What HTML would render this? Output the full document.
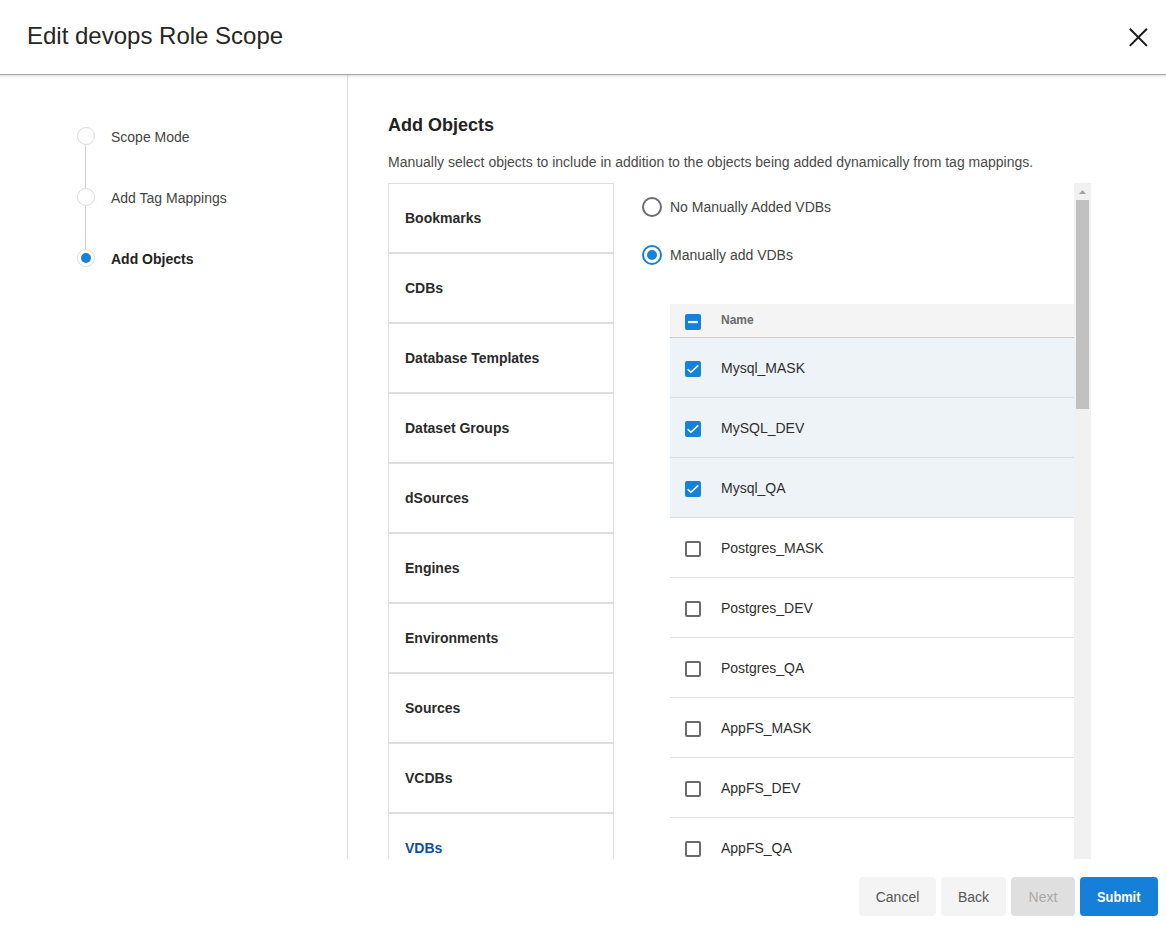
<!DOCTYPE html>
<html>
<head>
<meta charset="utf-8">
<style>
*{box-sizing:border-box}
html,body{margin:0;padding:0}
body{width:1166px;height:925px;position:relative;overflow:hidden;background:#fff;font-family:"Liberation Sans",sans-serif;color:#222}
.hdr{position:absolute;left:-10px;top:0;width:1186px;height:75px;border-bottom:1px solid #a6a6a6;box-shadow:0 1px 3px rgba(0,0,0,.16);background:#fff;z-index:2}
.title{position:absolute;left:37px;top:22px;font-size:24px;line-height:28px;color:#262626;white-space:nowrap}
.close{position:absolute;left:1139px;top:28px;width:19px;height:19px}
.left{position:absolute;left:0;top:75px;width:348px;height:784px;border-right:1px solid #ddd}
.step{position:absolute;left:77px;width:18px;height:18px;border:1px solid #dcdcdc;border-radius:50%;background:#fff}
.step .dot{position:absolute;left:3px;top:3px;width:10px;height:10px;border-radius:50%;background:#1681d9}
.vline{position:absolute;left:85px;width:1px;background:#cfcfcf}
.slabel{position:absolute;left:111px;font-size:14px;line-height:16px;color:#444;white-space:nowrap}
.slabel.b{font-weight:bold;color:#222}
.main{position:absolute;left:348px;top:75px;width:818px;height:784px;overflow:hidden}
.h2{position:absolute;left:40px;top:39px;font-size:18px;line-height:22px;font-weight:bold;color:#222;white-space:nowrap}
.desc{position:absolute;left:40px;top:79px;font-size:14px;line-height:16px;color:#4a4a4a;white-space:nowrap}
.tabs{position:absolute;left:40px;top:108px;width:226px}
.tab{height:70px;border:1px solid #dedede;font-weight:bold;font-size:14px;line-height:68px;padding-left:16px;color:#2a2a2a;white-space:nowrap}
.tab.act{color:#0c4ea3}
.radio{position:absolute;left:294px;width:20px;height:20px;border:2px solid #6b6b6b;border-radius:50%}
.radio.on{border-color:#1681d9}
.radio.on .dot{position:absolute;left:3px;top:3px;width:10px;height:10px;border-radius:50%;background:#1681d9}
.rlabel{position:absolute;left:322px;font-size:14px;line-height:16px;color:#444;white-space:nowrap}
.tbl{position:absolute;left:322px;top:229px;width:404px}
.th{height:34px;background:#f4f4f4;border-bottom:1px solid #cdcdcd;position:relative}
.tr{height:60px;border-bottom:1px solid #e2e2e2;position:relative;background:#fff}
.tr.sel{background:#eef3f8;border-bottom-color:#d8dde2}
.cb{position:absolute;left:15px;width:16px;height:16px;border-radius:2px}
.th .cb{top:10px;background:#1681d9}
.tr .cb{top:23px;border:2px solid #6b6b6b}
.tr.sel .cb{background:#1681d9;border:none}
.cb svg{position:absolute;left:0;top:0}
.th .nm{position:absolute;left:51px;top:9px;font-size:12px;line-height:14px;font-weight:bold;color:#6a6a6a}
.tr .nm{position:absolute;left:51px;top:22px;font-size:14px;line-height:16px;color:#2e2e2e;white-space:nowrap}
.track{position:absolute;left:726px;top:108px;width:17px;height:676px;background:#f1f1f1}
.thumb{position:absolute;left:2px;top:17px;width:13px;height:209px;background:#c1c1c1}
.arrow{position:absolute;left:5px;top:7px;width:0;height:0;border-left:3.5px solid transparent;border-right:3.5px solid transparent;border-bottom:4px solid #a3a3a3}
.btn{position:absolute;top:877px;height:39px;border-radius:4px;font-size:14px;line-height:41px;text-align:center;white-space:nowrap}
.b1{left:859px;width:77px;background:#f4f4f4;color:#555}
.b2{left:941px;width:65px;background:#f4f4f4;color:#555}
.b3{left:1011px;width:64px;background:#dfdfdf;color:#a9a9a9}
.b4{left:1080px;width:78px;background:#1680d9;color:#fff;font-weight:bold;font-size:14px}
.b4 span{display:inline-block;transform:scaleX(0.915)}
</style>
</head>
<body>
<div class="hdr">
  <div class="title">Edit devops Role Scope</div>
  <svg class="close" viewBox="0 0 19 19" width="19" height="19"><path d="M0.8 0.8L17.9 17.9M17.9 0.8L0.8 17.9" stroke="#1a1a1a" stroke-width="2" fill="none"/></svg>
</div>

<div class="left">
  <div class="vline" style="top:70px;height:44px"></div>
  <div class="vline" style="top:131px;height:44px"></div>
  <div class="step" style="top:52px"></div>
  <div class="step" style="top:113px"></div>
  <div class="step" style="top:174px"><div class="dot"></div></div>
  <div class="slabel" style="top:54px">Scope Mode</div>
  <div class="slabel" style="top:115px">Add Tag Mappings</div>
  <div class="slabel b" style="top:176px">Add Objects</div>
</div>

<div class="main">
  <div class="h2">Add Objects</div>
  <div class="desc">Manually select objects to include in addition to the objects being added dynamically from tag mappings.</div>
  <div class="tabs">
    <div class="tab">Bookmarks</div>
    <div class="tab">CDBs</div>
    <div class="tab">Database Templates</div>
    <div class="tab">Dataset Groups</div>
    <div class="tab">dSources</div>
    <div class="tab">Engines</div>
    <div class="tab">Environments</div>
    <div class="tab">Sources</div>
    <div class="tab">VCDBs</div>
    <div class="tab act">VDBs</div>
  </div>

  <div class="radio" style="top:122px"></div>
  <div class="rlabel" style="top:124px">No Manually Added VDBs</div>
  <div class="radio on" style="top:170px"><div class="dot"></div></div>
  <div class="rlabel" style="top:172px">Manually add VDBs</div>

  <div class="tbl">
    <div class="th"><div class="cb"><svg width="16" height="16"><rect x="3" y="6.95" width="10" height="2.2" fill="#fff"/></svg></div><div class="nm">Name</div></div>
    <div class="tr sel"><div class="cb"><svg width="16" height="16"><path d="M2.7 8.3L5.9 11.3L13.3 4.4" stroke="#fff" stroke-width="1.5" fill="none"/></svg></div><div class="nm">Mysql_MASK</div></div>
    <div class="tr sel"><div class="cb"><svg width="16" height="16"><path d="M2.7 8.3L5.9 11.3L13.3 4.4" stroke="#fff" stroke-width="1.5" fill="none"/></svg></div><div class="nm">MySQL_DEV</div></div>
    <div class="tr sel"><div class="cb"><svg width="16" height="16"><path d="M2.7 8.3L5.9 11.3L13.3 4.4" stroke="#fff" stroke-width="1.5" fill="none"/></svg></div><div class="nm">Mysql_QA</div></div>
    <div class="tr"><div class="cb"></div><div class="nm">Postgres_MASK</div></div>
    <div class="tr"><div class="cb"></div><div class="nm">Postgres_DEV</div></div>
    <div class="tr"><div class="cb"></div><div class="nm">Postgres_QA</div></div>
    <div class="tr"><div class="cb"></div><div class="nm">AppFS_MASK</div></div>
    <div class="tr"><div class="cb"></div><div class="nm">AppFS_DEV</div></div>
    <div class="tr"><div class="cb"></div><div class="nm">AppFS_QA</div></div>
  </div>

  <div class="track"><svg style="position:absolute;left:0;top:0" width="17" height="14"><polygon points="5,11 12,11 8.5,7" fill="#a3a3a3"/></svg><div class="thumb"></div></div>
</div>

<div class="btn b1">Cancel</div>
<div class="btn b2">Back</div>
<div class="btn b3">Next</div>
<div class="btn b4"><span>Submit</span></div>
</body>
</html>
